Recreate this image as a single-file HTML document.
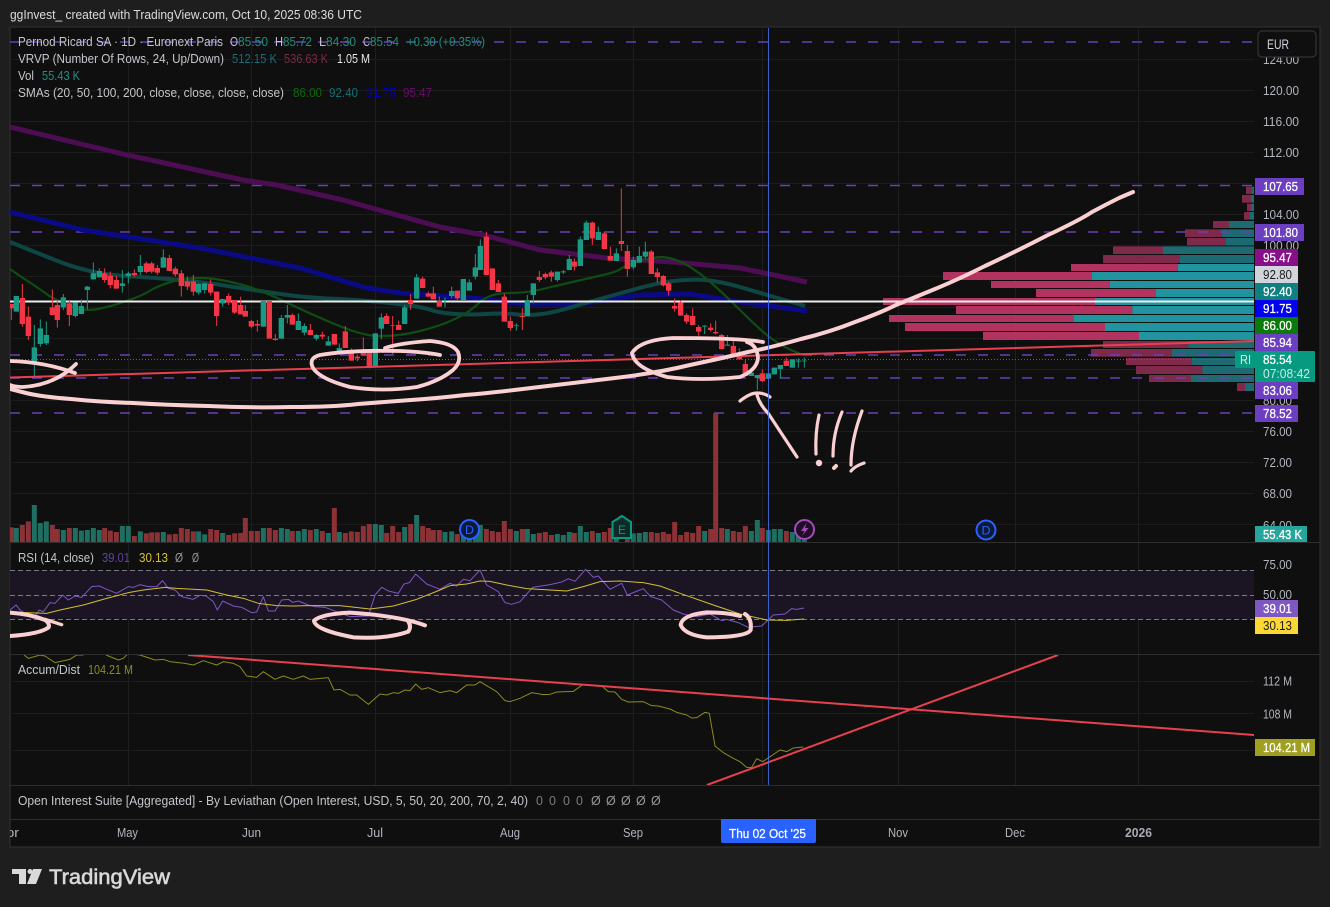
<!DOCTYPE html>
<html><head><meta charset="utf-8"><title>Pernod Ricard SA chart</title>
<style>
html,body{margin:0;padding:0;background:#1e1e1e;width:1330px;height:907px;overflow:hidden}
svg{display:block}
text{font-family:"Liberation Sans",sans-serif;font-size:12.5px;fill:#b2b5be}
.l{fill:#c4c6cc}
.s{fill:#b2b5be;font-size:12.5px}
.w{fill:#fff;font-size:13px;stroke:#fff;stroke-width:.25}
.k{fill:#1a1a1a;font-size:13px}
.p{fill:none;stroke:#fbd0d2;stroke-linecap:round;stroke-linejoin:round}
.n{fill:none;stroke-linejoin:round}
</style></head><body>
<svg width="1330" height="907" viewBox="0 0 1330 907" xmlns="http://www.w3.org/2000/svg">
<defs>
<clipPath id="c"><rect x="10" y="28" width="1244" height="514"/></clipPath>
<clipPath id="cr"><rect x="10" y="543" width="1244" height="111"/></clipPath>
<clipPath id="ca"><rect x="10" y="655" width="1244" height="130"/></clipPath>
<clipPath id="ct"><rect x="10" y="820" width="1310" height="26"/></clipPath>
</defs>
<rect width="1330" height="907" fill="#1e1e1e"/>
<rect x="10" y="27" width="1310" height="820" fill="#0f0f0f" stroke="#2e2e2e" stroke-width="1.2"/>
<text x="10" y="19" textLength="352" lengthAdjust="spacingAndGlyphs" style="fill:#dcdcdc;font-size:12.5px">ggInvest_ created with TradingView.com, Oct 10, 2025 08:36 UTC</text>

<!-- grid -->
<path fill="none" stroke="#1f1f1f" d="M128.5 28V785M251.5 28V785M375.5 28V785M510.5 28V785M633.5 28V785M762.5 28V785M898.5 28V785M1015.5 28V785M1138.5 28V785"/>
<path fill="none" stroke="#1c1c1c" d="M10 59.5H1254M10 90.5H1254M10 121.5H1254M10 152.5H1254M10 183.5H1254M10 214.5H1254M10 245.5H1254M10 276.5H1254M10 307.5H1254M10 338.5H1254M10 369.5H1254M10 400.5H1254M10 431.5H1254M10 462.5H1254M10 493.5H1254M10 524.5H1254M10 681.5H1254M10 713.5H1254M10 750.5H1254"/>

<!-- separators -->
<path fill="none" stroke="#2e2e2e" d="M10 542.5H1320M10 654.5H1320M10 785.5H1320M10 819.5H1320"/>

<g clip-path="url(#c)">
<!-- VRVP -->
<g transform="translate(880,170) scale(.33333)">
<g fill="#7f2a4a">
<rect x="1098" y="50" width="17" height="22"/><rect x="1086" y="75" width="27" height="23"/><rect x="1101" y="101" width="12" height="22"/><rect x="1092" y="126" width="18" height="23"/><rect x="999" y="153" width="48" height="21"/><rect x="915" y="178" width="110" height="23"/><rect x="921" y="204" width="117" height="22"/><rect x="699" y="229" width="150" height="23"/><rect x="669" y="255" width="231" height="24"/>
<rect x="669" y="513" width="256" height="21"/><rect x="633" y="537" width="243" height="23"/><rect x="738" y="564" width="196" height="21"/><rect x="768" y="588" width="199" height="24"/><rect x="807" y="615" width="126" height="21"/><rect x="1071" y="639" width="24" height="24"/>
</g>
<g fill="#1d6a72">
<rect x="1115" y="50" width="7" height="22"/><rect x="1113" y="75" width="9" height="23"/><rect x="1113" y="101" width="9" height="22"/><rect x="1110" y="126" width="12" height="23"/><rect x="1047" y="153" width="75" height="21"/><rect x="1025" y="178" width="97" height="23"/><rect x="1038" y="204" width="84" height="22"/><rect x="849" y="229" width="273" height="23"/><rect x="900" y="255" width="222" height="24"/>
<rect x="925" y="513" width="197" height="21"/><rect x="876" y="537" width="246" height="23"/><rect x="934" y="564" width="188" height="21"/><rect x="967" y="588" width="155" height="24"/><rect x="933" y="615" width="189" height="21"/><rect x="1095" y="639" width="27" height="24"/>
</g>
<g fill="#b23360">
<rect x="573" y="282" width="321" height="21"/><rect x="189" y="306" width="447" height="24"/><rect x="333" y="333" width="357" height="21"/><rect x="468" y="357" width="360" height="24"/><rect x="9" y="384" width="636" height="21"/><rect x="228" y="408" width="529" height="24"/><rect x="27" y="435" width="555" height="21"/><rect x="75" y="459" width="600" height="24"/><rect x="309" y="486" width="468" height="24"/>
</g>
<g fill="#22949f">
<rect x="894" y="282" width="228" height="21"/><rect x="636" y="306" width="486" height="24"/><rect x="690" y="333" width="432" height="21"/><rect x="828" y="357" width="294" height="24"/><rect x="645" y="384" width="477" height="21"/><rect x="757" y="408" width="365" height="24"/><rect x="582" y="435" width="540" height="21"/><rect x="675" y="459" width="447" height="24"/><rect x="777" y="486" width="345" height="24"/>
</g>
</g>

<!-- volume -->
<g transform="translate(0,490) scale(.33333)" fill="none" stroke-width="15">
<path stroke="#8a3236" d="M34 112V157M67 105V157M85 94V157M157 105V157M172 117V157M208 114V157M314 114V157M331 122V157M349 126V157M403 138V157M439 130V157M455 127V157M472 127V157M508 133V157M526 132V157M544 114V157M562 117V157M580 124V157M632 117V157M650 120V157M686 135V157M704 130V157M722 129V157M736 84V157M754 123V157M772 123V157M808 114V157M826 120V157M877 123V157M931 120V157M967 123V157M1003 54V157M1036 129V157M1054 124V157M1072 126V157M1090 108V157M1108 102V157M1160 129V157M1178 108V157M1196 126V157M1232 102V157M1268 108V157M1285 114V157M1300 120V157M1318 120V157"/>
<path stroke="#1e6e62" d="M49 114V157M103 45V157M121 99V157M139 94V157M190 120V157M226 114V157M244 122V157M262 120V157M280 114V157M298 120V157M367 108V157M385 108V157M421 124V157M490 126V157M596 124V157M614 133V157M668 129V157M790 114V157M844 114V157M862 117V157M895 123V157M913 117V157M949 117V157M985 129V157M1018 126V157M1126 102V157M1144 105V157M1214 111V157M1250 75V157"/>
</g>
<g transform="translate(440,490) scale(.33333)" fill="none" stroke-width="15">
<path stroke="#8a3236" d="M52 132V157M139 117V157M157 123V157M175 126V157M193 93V157M211 117V157M247 117V157M298 129V157M316 126V157M334 135V157M403 129V157M457 123V157M493 126V157M511 114V157M544 78V84M562 114V157M634 126V157M652 129V157M670 126V157M686 132V157M704 96V157M722 135V157M740 126V157M758 129V157M776 108V157M812 117V157M827 -230V157M845 114V157M880 123V157M898 126V157M916 108V157M967 114V157M1039 123V157"/>
<path stroke="#1e6e62" d="M15 126V157M35 124V157M70 120V157M88 135V157M106 120V157M121 105V157M229 123V157M262 117V157M280 132V157M352 132V157M370 135V157M388 126V157M421 108V157M439 126V157M475 129V157M529 120V157M580 130V157M598 129V157M616 126V157M794 123V157M862 117V157M934 123V157M952 90V157M985 120V157M1003 117V157M1021 117V157M1057 126V157M1075 132V157M1093 150V157"/>
</g>

<!-- horizontal levels -->
<path fill="none" stroke="#6a3fb5" stroke-width="1.5" stroke-dasharray="10 12" d="M10 42H1254M10 185.5H1254M10 232H1254M10 355H1254M10 378H1254M10 413H1254"/>
<path fill="none" stroke="#0c8a76" stroke-width="1" stroke-dasharray="1 2" d="M10 359.5H1254"/>

<!-- SMAs -->
<polyline class="n" stroke="#4d0d52" stroke-width="5" points="10,127 127,155 243,180 277,185 343,200 440,227 483,235 540,250 607,258 673,262 740,268 807,282"/>
<polyline class="n" stroke="#0a0a85" stroke-width="5" points="10,212 83,230 200,248 300,268 367,288 400,293 440,296 473,298 523,304 580,304 640,295 690,294 740,302 807,311"/>
<path class="n" stroke="#0e4644" stroke-width="4" d="M10 242L25 248Q40 254 55 260Q70 266 86 270Q103 275 140 277Q177 279 215 284Q253 290 280 294Q307 298 340 299Q373 301 398 304Q423 307 431 310Q440 313 456 314Q473 315 486 314Q500 313 513 314Q527 316 542 314Q557 312 582 304Q607 297 632 290Q657 283 673 281Q690 279 706 280Q723 282 740 287Q757 292 781 299L805 306"/>
<path class="n" stroke="#0f4d12" stroke-width="2.2" d="M10 269L23 278Q37 287 45 293Q53 299 68 305Q83 312 98 309Q113 306 126 301Q140 297 153 289Q167 282 183 279Q200 277 216 279Q233 282 250 287Q267 293 292 305Q317 317 342 327Q367 337 383 336Q400 336 420 331Q440 326 455 319Q470 312 480 302Q490 293 510 293Q530 293 551 287Q573 282 581 280Q590 278 603 275Q617 272 622 268Q627 265 640 261Q653 257 663 257Q673 258 683 263Q693 268 708 280Q723 293 740 310Q757 327 768 336Q780 345 791 350L803 355"/>
<path stroke="#ececec" stroke-width="2" d="M10 301.5H1254"/>

<!-- candles -->
<g transform="translate(0,180) scale(.33333)" fill="none">
<path stroke="#1a9a84" stroke-width="3" d="M49 348V395M103 435V590M121 418V500M139 425V495M190 342V390M226 367V412M244 358V402M262 318V388M280 247V298M298 265V292M367 270V338M385 275V310M421 225V285M490 208V263M596 310V344M614 308V340M668 357V380M790 363V440M844 405V476M862 375V430M895 400V450M913 430V466M949 462V482M985 468V497M1018 490V524M1126 460V562M1144 400V478M1214 375V432M1250 282V356"/>
<path stroke="#1a9a84" stroke-width="16" d="M49 348V395M103 502V545M121 445V492M139 465V490M190 352V382M226 367V408M244 378V402M262 320V330M280 280V298M298 273V292M367 310V318M385 280V288M421 258V276M490 232V263M596 312V338M614 310V330M668 357V370M790 363V440M844 414V476M862 405V413M895 423V450M913 438V458M949 465V476M985 484V497M1018 504V518M1126 460V562M1144 412V446M1214 382V432M1250 292V356"/>
<path stroke="#f23645" stroke-width="3" d="M34 372V420M67 312V440M85 380V480M157 328V405M172 360V443M208 360V438M314 265V308M331 275V325M349 288V326M403 268V290M439 245V280M455 245V280M472 255V285M508 225V273M526 260V290M544 270V350M562 290V330M580 285V347M632 298V347M650 335V438M686 340V375M704 360V402M722 350V403M736 375V410M754 420V445M772 420V455M808 363V476M826 462V482M877 400V434M931 432V465M967 455V478M1003 462V494M1036 438V504M1054 505V542M1072 524V544M1090 472V527M1108 508V565M1160 400V432M1178 408V522M1196 422V450M1232 342V390M1268 290V324M1285 335V350M1300 320V358M1318 350V380"/>
<path stroke="#f23645" stroke-width="16" d="M34 372V385M67 354V432M85 410V468M157 382V405M172 375V420M208 370V405M314 280V300M331 287V315M349 300V326M403 279V285M439 250V276M455 250V275M472 264V278M508 234V273M526 266V283M544 280V318M562 304V320M580 304V335M632 312V338M650 335V408M686 348V368M704 360V398M722 375V403M736 393V410M754 423V440M772 432V437M808 363V476M826 476V480M877 405V434M931 450V465M967 464V470M1003 462V494M1036 454V504M1054 510V542M1072 530V535M1090 518V527M1108 514V560M1160 408V432M1178 436V438M1196 435V450M1232 360V372M1268 296V324M1285 340V350M1300 340V358M1318 362V380"/>
</g>
<g transform="translate(440,180) scale(.33333)" fill="none">
<path stroke="#1a9a84" stroke-width="3" d="M15 352V382M35 320V355M70 297V360M88 298V332M106 222V298M121 178V270M229 430V452M262 345V408M280 310V370M352 275V305M370 270V282M388 225V270M421 170V258M439 122V180M475 140V180M529 205V243M580 230V268M598 200V248M616 185V235M794 436V462M862 465V497M934 565V588M952 585V630M985 580V596M1003 563V583M1021 555V596M1057 538V563M1075 535V563M1093 532V563"/>
<path stroke="#1a9a84" stroke-width="16" d="M15 360V363M35 333V348M70 297V360M88 307V332M106 262V290M121 198V270M229 435V437M262 360V408M280 310V345M352 275V300M370 274V277M388 237V270M421 178V258M439 128V180M475 156V180M529 220V243M580 240V262M598 228V248M616 215V230M794 437V440M862 494V497M934 578V588M952 585V594M985 580V596M1003 563V583M1021 555V567M1057 538V563M1075 542V545M1093 542V544"/>
<path stroke="#f23645" stroke-width="3" d="M52 332V360M139 155V285M157 265V330M175 300V336M193 340V425M211 410V452M247 385V450M298 273V306M316 278V298M334 272V305M403 235V272M457 125V195M493 155V207M511 200V242M544 25V213M562 195V290M634 210V282M652 265V308M670 285V320M686 305V347M704 355V395M722 362V407M740 400V432M758 385V435M776 435V467M812 430V455M827 422V463M845 462V507M880 480V528M898 505V538M916 540V588M967 568V606M1039 533V558"/>
<path stroke="#f23645" stroke-width="16" d="M52 332V355M139 170V285M157 265V330M175 310V336M193 350V425M211 423V444M247 408V411M298 291V300M316 282V292M334 277V290M403 245V260M457 128V175M493 160V207M511 228V242M544 183V192M562 213V267M634 215V282M652 277V291M670 288V316M686 310V332M704 378V386M722 367V407M740 405V425M758 408V435M776 441V455M812 443V450M827 456V460M845 465V507M880 498V528M898 525V538M916 552V588M967 580V603M1039 542V558"/>
</g>

<!-- drawings main -->
<path stroke="#e8404f" stroke-width="2" d="M10 377.5L1254 341"/>
<path class="p" stroke-width="4" d="M10 389L26 393Q43 397 71 399Q100 402 133 403Q167 405 208 406Q250 408 291 407Q333 407 358 404Q383 402 411 400Q440 398 465 395Q490 393 531 388Q573 383 615 378Q657 373 690 365Q723 358 748 352Q773 347 801 339Q830 332 855 322Q880 313 896 305Q913 298 935 289Q957 280 985 266Q1013 253 1046 236Q1080 220 1092 212Q1105 205 1119 198L1133 192"/>
<path class="p" stroke-width="3.8" d="M10 361Q45 362 75 373"/>
<path class="p" stroke-width="3.8" d="M76 364Q55 385 23 387Q15 387 10 385"/>
<path class="p" stroke-width="3.8" d="M385 348Q400 343 430 341Q453 343 458 352Q462 362 453 370Q440 381 417 387Q383 392 350 387Q320 379 313 368Q308 358 320 355Q350 350 400 351Q425 352 440 355"/>
<path class="p" stroke-width="3.8" d="M763 342Q740 338 673 338Q640 340 632 353Q634 368 667 377Q700 381 740 377Q757 370 758 358Q757 345 747 342"/>
<path class="p" stroke-width="3.2" d="M740 401Q750 393 757 393Q765 393 770 397"/>
<path class="p" stroke-width="3.2" d="M757 395Q760 405 768 413L797 457"/>
<path class="p" stroke-width="3.2" d="M819 415Q815 433 816 454"/>
<circle cx="819" cy="463" r="3.2" fill="#fbd0d2"/>
<path class="p" stroke-width="3.2" d="M842 412Q833 433 833 456"/>
<path class="p" stroke-width="4" d="M834 468L836 466"/>
<path class="p" stroke-width="3.2" d="M862 411Q851 440 851 465"/>
<path class="p" stroke-width="3.2" d="M851 471Q855 466 864 463"/>

<!-- markers -->
<circle cx="469.5" cy="529.5" r="9.5" fill="#0c1a3a" stroke="#2962ff" stroke-width="2"/>
<text x="465" y="534" textLength="9" lengthAdjust="spacingAndGlyphs" style="fill:#2962ff;font-size:12px">D</text>
<path d="M612.5 522L622 516 631 522V538H612.5Z" fill="#0c2b26" stroke="#089981" stroke-width="2"/>
<text x="618" y="534" textLength="8" lengthAdjust="spacingAndGlyphs" style="fill:#089981;font-size:12px">E</text>
<circle cx="804.5" cy="529.5" r="9.5" fill="#1d0f26" stroke="#ab47bc" stroke-width="2"/>
<path d="M806.5 523L801 531H804.5L802 536 808.5 528H805Z" fill="#ab47bc"/>
<circle cx="986" cy="530" r="9.5" fill="#0c1a3a" stroke="#2962ff" stroke-width="2"/>
<text x="981.5" y="534.5" textLength="9" lengthAdjust="spacingAndGlyphs" style="fill:#2962ff;font-size:12px">D</text>
</g>

<!-- RSI -->
<rect x="10" y="570" width="1244" height="49.5" fill="#1a1423"/>
<path fill="none" stroke="#787b86" stroke-dasharray="5 3" d="M10 570.5H1254M10 595.5H1254M10 619.5H1254"/>
<g clip-path="url(#cr)">
<g transform="translate(0,490) scale(.33333)">
<polyline class="n" stroke="#7e57c2" stroke-width="3" points="30,360 48,345 62,362 80,372 100,385 118,360 130,365 150,338 165,340 188,315 205,330 225,318 245,322 275,290 298,288 320,298 350,310 385,290 400,292 420,284 445,290 470,290 488,272 505,295 525,300 545,320 580,328 600,316 618,318 640,335 652,360 668,333 700,348 725,352 755,368 770,366 790,320 805,363 825,363 845,330 865,328 878,337 895,333 925,345 945,350 975,352 1050,380 1105,378 1125,315 1145,292 1165,303 1195,310 1212,282 1228,278 1247,252 1280,282 1320,298"/>
<polyline class="n" stroke="#d4c030" stroke-width="3" points="30,368 80,368 140,370 180,360 250,345 320,325 385,308 430,300 495,292 530,295 620,300 680,315 730,325 775,340 830,347 880,348 930,347 1020,347 1110,357 1180,348 1250,328 1320,300"/>
<path class="p" stroke-width="12" d="M30 368Q90 372 135 390Q150 400 146 412Q120 432 30 438"/>
<path class="p" stroke-width="10" d="M135 388L185 404"/>
<path class="p" stroke-width="12" d="M1275 406Q1200 378 1050 368Q965 372 942 392Q945 420 1060 442Q1160 448 1225 425Q1235 410 1225 395"/>
</g>
<g transform="translate(440,490) scale(.33333)">
<polyline class="n" stroke="#7e57c2" stroke-width="3" points="0,298 30,280 50,288 70,268 90,272 120,240 140,285 175,305 195,338 215,343 240,335 278,292 330,284 365,276 385,266 405,274 437,238 460,262 475,258 510,298 545,280 562,315 610,296 632,320 665,330 700,360 730,372 770,380 810,372 845,392 860,388 895,398 925,412 965,408 1000,375 1035,372 1055,356 1070,358 1092,354"/>
<polyline class="n" stroke="#d4c030" stroke-width="3" points="0,300 30,287 80,282 120,273 150,274 200,285 260,296 330,300 380,303 430,290 480,275 540,273 610,278 660,288 720,310 820,345 900,372 980,390 1040,391 1092,387"/>
<path class="p" stroke-width="12" d="M915 372Q936 385 932 420Q920 442 800 442Q735 435 722 405Q725 375 800 367Q860 367 900 378"/>
</g>
</g>

<!-- A/D -->
<g clip-path="url(#ca)">
<g transform="translate(0,650) scale(.33333)">
<polyline class="n" stroke="#8b8b1e" stroke-width="3" points="72,15 85,25 120,15 135,18 165,38 210,28 230,15 250,15"/>
<polyline class="n" stroke="#8b8b1e" stroke-width="3" points="318,15 355,30 370,25 385,10 420,15 465,30 490,28 510,35 555,40 580,45 610,32 650,45 670,35 700,40 720,50 740,78 770,82 790,65 825,88 850,78 880,88 910,78 930,88 985,83 1002,120 1020,118 1050,135 1070,135 1105,163 1140,132 1160,135 1180,128 1195,130 1215,120 1230,122 1247,102 1265,118 1285,113 1320,128"/>
</g>
<g transform="translate(440,650) scale(.33333)">
<polyline class="n" stroke="#8b8b1e" stroke-width="3" points="0,128 30,122 50,128 80,105 105,105 120,95 170,125 195,152 210,155 240,145 275,128 310,134 330,133 350,126 400,124 430,103 485,108 505,125 525,126 545,148 565,156 610,155 635,167 655,168 690,177 710,187 740,195 755,204 770,203 795,187 808,190 825,288 850,308 880,325 900,335 920,352 935,352 950,326 968,335 1020,300 1040,305 1060,294 1090,291"/>
</g>
<path stroke="#e8404f" stroke-width="2" d="M188 655L1254 735M707 785L1058 655"/>
</g>

<!-- crosshair -->
<path stroke="#3f6fe8" stroke-opacity=".85" d="M768.5 28V785"/>

<!-- legend -->
<text class="l" x="18" y="46" textLength="205" lengthAdjust="spacingAndGlyphs">Pernod Ricard SA · 1D · Euronext Paris</text>
<text class="l" x="230" y="46" textLength="8" lengthAdjust="spacingAndGlyphs">O</text><text x="238" y="46" textLength="30" lengthAdjust="spacingAndGlyphs" style="fill:#1f8f7c">85.50</text>
<text class="l" x="275" y="46" textLength="8" lengthAdjust="spacingAndGlyphs">H</text><text x="283" y="46" textLength="29" lengthAdjust="spacingAndGlyphs" style="fill:#1f8f7c">85.72</text>
<text class="l" x="319" y="46" textLength="7" lengthAdjust="spacingAndGlyphs">L</text><text x="326" y="46" textLength="30" lengthAdjust="spacingAndGlyphs" style="fill:#1f8f7c">84.30</text>
<text class="l" x="363" y="46" textLength="7" lengthAdjust="spacingAndGlyphs">C</text><text x="370" y="46" textLength="29" lengthAdjust="spacingAndGlyphs" style="fill:#1f8f7c">85.54</text>
<text x="407" y="46" textLength="78" lengthAdjust="spacingAndGlyphs" style="fill:#1f8f7c">+0.30 (+0.35%)</text>
<text class="l" x="18" y="63" textLength="206" lengthAdjust="spacingAndGlyphs">VRVP (Number Of Rows, 24, Up/Down)</text>
<text x="232" y="63" textLength="45" lengthAdjust="spacingAndGlyphs" style="fill:#1d6a78">512.15 K</text>
<text x="284" y="63" textLength="44" lengthAdjust="spacingAndGlyphs" style="fill:#7a2a48">536.63 K</text>
<text x="337" y="63" textLength="33" lengthAdjust="spacingAndGlyphs" style="fill:#e6e6e6">1.05 M</text>
<text class="l" x="18" y="80" textLength="16" lengthAdjust="spacingAndGlyphs">Vol</text>
<text x="42" y="80" textLength="38" lengthAdjust="spacingAndGlyphs" style="fill:#1f8f82">55.43 K</text>
<text class="l" x="18" y="97" textLength="266" lengthAdjust="spacingAndGlyphs">SMAs (20, 50, 100, 200, close, close, close, close)</text>
<text x="293" y="97" textLength="29" lengthAdjust="spacingAndGlyphs" style="fill:#0a6a0a">86.00</text>
<text x="329" y="97" textLength="29" lengthAdjust="spacingAndGlyphs" style="fill:#0f7077">92.40</text>
<text x="366" y="97" textLength="30" lengthAdjust="spacingAndGlyphs" style="fill:#0000b8">91.75</text>
<text x="403" y="97" textLength="29" lengthAdjust="spacingAndGlyphs" style="fill:#6e0a72">95.47</text>
<text class="l" x="18" y="562" textLength="76" lengthAdjust="spacingAndGlyphs">RSI (14, close)</text>
<text x="102" y="562" textLength="28" lengthAdjust="spacingAndGlyphs" style="fill:#5e45a0">39.01</text>
<text x="139" y="562" textLength="29" lengthAdjust="spacingAndGlyphs" style="fill:#d9c030">30.13</text>
<text x="175" y="562" textLength="8" lengthAdjust="spacingAndGlyphs" style="fill:#999">Ø</text>
<text x="192" y="562" textLength="7" lengthAdjust="spacingAndGlyphs" style="fill:#999">Ø</text>
<text class="l" x="18" y="674" textLength="62" lengthAdjust="spacingAndGlyphs">Accum/Dist</text>
<text x="88" y="674" textLength="45" lengthAdjust="spacingAndGlyphs" style="fill:#8b8b1e">104.21 M</text>
<text class="l" x="18" y="805" textLength="510" lengthAdjust="spacingAndGlyphs">Open Interest Suite [Aggregated] - By Leviathan (Open Interest, USD, 5, 50, 20, 200, 70, 2, 40)</text>
<text x="536" y="805" style="fill:#787b86">0</text><text x="549" y="805" style="fill:#787b86">0</text><text x="563" y="805" style="fill:#787b86">0</text><text x="576" y="805" style="fill:#787b86">0</text>
<text x="591" y="805" style="fill:#999">Ø</text><text x="606" y="805" style="fill:#999">Ø</text><text x="621" y="805" style="fill:#999">Ø</text><text x="636" y="805" style="fill:#999">Ø</text><text x="651" y="805" style="fill:#999">Ø</text>

<!-- scale -->
<g>
<text class="s" x="1263" y="64" textLength="36" lengthAdjust="spacingAndGlyphs">124.00</text>
<text class="s" x="1263" y="95" textLength="36" lengthAdjust="spacingAndGlyphs">120.00</text>
<text class="s" x="1263" y="126" textLength="36" lengthAdjust="spacingAndGlyphs">116.00</text>
<text class="s" x="1263" y="157" textLength="36" lengthAdjust="spacingAndGlyphs">112.00</text>
<text class="s" x="1263" y="219" textLength="36" lengthAdjust="spacingAndGlyphs">104.00</text>
<text class="s" x="1263" y="250" textLength="36" lengthAdjust="spacingAndGlyphs">100.00</text>
<text class="s" x="1263" y="405" textLength="29" lengthAdjust="spacingAndGlyphs">80.00</text>
<text class="s" x="1263" y="436" textLength="29" lengthAdjust="spacingAndGlyphs">76.00</text>
<text class="s" x="1263" y="467" textLength="29" lengthAdjust="spacingAndGlyphs">72.00</text>
<text class="s" x="1263" y="498" textLength="29" lengthAdjust="spacingAndGlyphs">68.00</text>
<text class="s" x="1263" y="530" textLength="29" lengthAdjust="spacingAndGlyphs">64.00</text>
<text class="s" x="1263" y="569" textLength="29" lengthAdjust="spacingAndGlyphs">75.00</text>
<text class="s" x="1263" y="599" textLength="29" lengthAdjust="spacingAndGlyphs">50.00</text>
<text class="s" x="1263" y="685.5" textLength="29" lengthAdjust="spacingAndGlyphs" style="font-size:13px">112 M</text>
<text class="s" x="1263" y="718.5" textLength="29" lengthAdjust="spacingAndGlyphs" style="font-size:13px">108 M</text>
</g>
<rect x="1258" y="31" width="58" height="26" rx="4" fill="#0f0f0f" stroke="#333" stroke-width="1.2"/>
<text x="1267" y="49" textLength="22" lengthAdjust="spacingAndGlyphs" style="fill:#d1d4dc;font-size:13.5px">EUR</text>

<!-- price labels -->
<rect x="1255" y="178" width="49" height="17" fill="#6c3fc0"/><text class="w" x="1263" y="191" textLength="35" lengthAdjust="spacingAndGlyphs">107.65</text>
<rect x="1255" y="224" width="49" height="17" fill="#6c3fc0"/><text class="w" x="1263" y="237" textLength="35" lengthAdjust="spacingAndGlyphs">101.80</text>
<rect x="1255" y="249" width="43" height="17" fill="#880e8a"/><text class="w" x="1263" y="262" textLength="29" lengthAdjust="spacingAndGlyphs">95.47</text>
<rect x="1255" y="266" width="43" height="17" fill="#d1d4dc"/><text class="k" x="1263" y="279" textLength="29" lengthAdjust="spacingAndGlyphs">92.80</text>
<rect x="1255" y="283" width="43" height="17" fill="#0f7f7f"/><text class="w" x="1263" y="296" textLength="29" lengthAdjust="spacingAndGlyphs">92.40</text>
<rect x="1255" y="300" width="43" height="17" fill="#0000ee"/><text class="w" x="1263" y="313" textLength="29" lengthAdjust="spacingAndGlyphs">91.75</text>
<rect x="1255" y="317" width="43" height="17" fill="#0a7a0a"/><text class="w" x="1263" y="330" textLength="29" lengthAdjust="spacingAndGlyphs">86.00</text>
<rect x="1255" y="334" width="43" height="17" fill="#6c3fc0"/><text class="w" x="1263" y="347" textLength="29" lengthAdjust="spacingAndGlyphs">85.94</text>
<rect x="1235" y="351" width="21" height="17" rx="2" fill="#089981"/><text x="1240" y="364" textLength="11" lengthAdjust="spacingAndGlyphs" style="fill:#d8f0ea;font-size:13px">RI</text>
<rect x="1255" y="351" width="60" height="31" rx="1" fill="#089981"/>
<text class="w" x="1263" y="364" textLength="29" lengthAdjust="spacingAndGlyphs">85.54</text>
<text x="1263" y="378" textLength="47" lengthAdjust="spacingAndGlyphs" style="fill:#c8ebe4;font-size:13px">07:08:42</text>
<rect x="1255" y="382" width="43" height="17" fill="#6c3fc0"/><text class="w" x="1263" y="395" textLength="29" lengthAdjust="spacingAndGlyphs">83.06</text>
<rect x="1255" y="405" width="43" height="17" fill="#6c3fc0"/><text class="w" x="1263" y="418" textLength="29" lengthAdjust="spacingAndGlyphs">78.52</text>
<rect x="1255" y="526" width="52" height="16" fill="#26a69a"/><text class="w" x="1263" y="539" textLength="39" lengthAdjust="spacingAndGlyphs">55.43 K</text>
<rect x="1255" y="600" width="43" height="17" fill="#7e57c2"/><text class="w" x="1263" y="613" textLength="29" lengthAdjust="spacingAndGlyphs">39.01</text>
<rect x="1255" y="617" width="43" height="17" fill="#fdd835"/><text class="k" x="1263" y="630" textLength="29" lengthAdjust="spacingAndGlyphs">30.13</text>
<rect x="1255" y="739" width="60" height="17" fill="#a0a020"/><text class="w" x="1263" y="752" textLength="47" lengthAdjust="spacingAndGlyphs">104.21 M</text>

<!-- time axis -->
<g clip-path="url(#ct)">
<text x="-3" y="837" textLength="22" lengthAdjust="spacingAndGlyphs" class="s">Apr</text>
</g>
<text class="s" x="117" y="837" textLength="21" lengthAdjust="spacingAndGlyphs">May</text>
<text class="s" x="242" y="837" textLength="19" lengthAdjust="spacingAndGlyphs">Jun</text>
<text class="s" x="367" y="837" textLength="16" lengthAdjust="spacingAndGlyphs">Jul</text>
<text class="s" x="500" y="837" textLength="20" lengthAdjust="spacingAndGlyphs">Aug</text>
<text class="s" x="623" y="837" textLength="20" lengthAdjust="spacingAndGlyphs">Sep</text>
<text class="s" x="888" y="837" textLength="20" lengthAdjust="spacingAndGlyphs">Nov</text>
<text class="s" x="1005" y="837" textLength="20" lengthAdjust="spacingAndGlyphs">Dec</text>
<text x="1125" y="837" textLength="27" lengthAdjust="spacingAndGlyphs" style="fill:#a8abb4;font-size:12.5px;font-weight:bold">2026</text>
<path d="M721 819H816V841Q816 843 814 843H723Q721 843 721 841Z" fill="#2962ff"/>
<text x="729" y="838" textLength="77" lengthAdjust="spacingAndGlyphs" class="w">Thu 02 Oct '25</text>

<!-- logo -->
<path d="M12 869H26V884H19V874H12Z" fill="#d9d9d9"/>
<circle cx="30" cy="871.5" r="2.5" fill="#d9d9d9"/>
<path d="M42 869L36 884H27L33 869Z" fill="#d9d9d9"/>
<text x="49" y="884" textLength="121" lengthAdjust="spacingAndGlyphs" style="fill:#d9d9d9;font-size:21px;stroke:#d9d9d9;stroke-width:.6">TradingView</text>
</svg>
</body></html>
